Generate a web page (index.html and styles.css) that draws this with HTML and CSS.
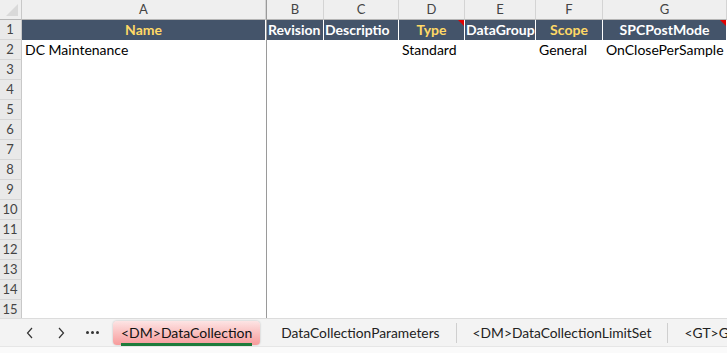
FILE: index.html
```html
<!DOCTYPE html>
<html>
<head>
<meta charset="utf-8">
<link rel="stylesheet" href="styles.css">
</head>
<body>
<div class="sheet">
  <div class="row colhead">
    <div class="rh corner"><span class="tri"></span></div>
    <div class="c a">A</div>
    <div class="c b frz">B</div>
    <div class="c cc">C</div>
    <div class="c d">D</div>
    <div class="c e">E</div>
    <div class="c f">F</div>
    <div class="c g">G</div>
  </div>
  <div class="row hdr">
    <div class="rh">1</div>
    <div class="c a y">Name</div>
    <div class="c b frz">Revision</div>
    <div class="c cc">Descriptio</div>
    <div class="c d y note">Type</div>
    <div class="c e">DataGroup</div>
    <div class="c f y">Scope</div>
    <div class="c g note">SPCPostMode</div>
  </div>
  <div class="row">
    <div class="rh">2</div>
    <div class="c a l">DC Maintenance</div>
    <div class="c b frz"></div>
    <div class="c cc"></div>
    <div class="c d l">Standard</div>
    <div class="c e"></div>
    <div class="c f l">General</div>
    <div class="c g l">OnClosePerSample</div>
  </div>
  <div class="row"><div class="rh">3</div><div class="c a"></div><div class="c b frz"></div></div>
  <div class="row"><div class="rh">4</div><div class="c a"></div><div class="c b frz"></div></div>
  <div class="row"><div class="rh">5</div><div class="c a"></div><div class="c b frz"></div></div>
  <div class="row"><div class="rh">6</div><div class="c a"></div><div class="c b frz"></div></div>
  <div class="row"><div class="rh">7</div><div class="c a"></div><div class="c b frz"></div></div>
  <div class="row"><div class="rh">8</div><div class="c a"></div><div class="c b frz"></div></div>
  <div class="row"><div class="rh">9</div><div class="c a"></div><div class="c b frz"></div></div>
  <div class="row"><div class="rh">10</div><div class="c a"></div><div class="c b frz"></div></div>
  <div class="row"><div class="rh">11</div><div class="c a"></div><div class="c b frz"></div></div>
  <div class="row"><div class="rh">12</div><div class="c a"></div><div class="c b frz"></div></div>
  <div class="row"><div class="rh">13</div><div class="c a"></div><div class="c b frz"></div></div>
  <div class="row"><div class="rh">14</div><div class="c a"></div><div class="c b frz"></div></div>
  <div class="row"><div class="rh">15</div><div class="c a"></div><div class="c b frz"></div></div>
</div>
<div class="tabbar">
  <div class="nav">
    <svg width="10" height="12" viewBox="0 0 10 12"><path d="M7 1 L2.5 6 L7 11" fill="none" stroke="#333" stroke-width="1.2"/></svg>
  </div>
  <div class="nav">
    <svg width="10" height="12" viewBox="0 0 10 12"><path d="M3 1 L7.5 6 L3 11" fill="none" stroke="#333" stroke-width="1.2"/></svg>
  </div>
  <div class="nav dots"><i></i><i></i><i></i></div>
  <div class="tab active"><span>&lt;DM&gt;DataCollection</span></div>
  <div class="tab">DataCollectionParameters</div>
  <div class="sep"></div>
  <div class="tab">&lt;DM&gt;DataCollectionLimitSet</div>
  <div class="sep"></div>
  <div class="tab">&lt;GT&gt;GenericTable</div>
</div>
<div class="status"></div>
</body>
</html>
```
FILE: styles.css
```css
html, body {
  margin: 0;
  padding: 0;
  background: #ffffff;
  overflow: hidden;
  width: 727px;
  height: 353px;
}
body {
  font-family: Lato, "Liberation Sans", sans-serif;
  font-size: 14px;
  color: #000;
}
.sheet {
  height: 318px;
  overflow: hidden;
}
.row {
  display: flex;
  height: 20px;
  white-space: nowrap;
}
.rh {
  flex: 0 0 22px;
  box-sizing: border-box;
  height: 20px;
  background: #e9e9e9;
  border-right: 1px solid #c8c8c8;
  border-bottom: 1px solid #d6d6d6;
  color: #444;
  font-size: 13px;
  line-height: 19px;
  text-align: center;
  padding-right: 1px;
}
.corner {
  position: relative;
  background: #efefef;
  border-bottom: 1px solid #b5b5b5;
}
.tri {
  position: absolute;
  right: 3px;
  bottom: 3px;
  width: 0;
  height: 0;
  border-left: 12px solid transparent;
  border-bottom: 12px solid #d9d9d9;
}
.c {
  box-sizing: border-box;
  height: 20px;
  line-height: 19px;
  overflow: hidden;
  flex: 0 0 auto;
}
.a { width: 244px; }
.b { width: 58px; }
.cc { width: 75px; }
.d { width: 66px; }
.e { width: 71px; }
.f { width: 67px; }
.g { width: 124px; }
.frz { border-left: 1px solid #9a9a9a; }
.colhead .c {
  background: #efefef;
  color: #444;
  text-align: center;
  font-size: 13px;
  border-right: 1px solid #d4d4d4;
  border-bottom: 1px solid #b5b5b5;
}
.colhead .frz { border-left: 1px solid #9a9a9a; }
.hdr .c {
  background: #44546a;
  color: #ffffff;
  font-weight: bold;
  text-align: center;
  border-right: 1px solid #ffffff;
  position: relative;
}
.hdr .frz { border-left: 1px solid #9a9a9a; }
.hdr .b, .hdr .cc, .hdr .e { text-align: left; padding-left: 1px; }
.hdr .y { color: #ffd966; }
.note::after {
  content: "";
  position: absolute;
  top: 0;
  right: 0;
  width: 0;
  height: 0;
  border-left: 6px solid transparent;
  border-top: 6px solid #e00000;
}
.l { padding-left: 3px; }
.tabbar {
  height: 27px;
  background: #f3f3f3;
  border-top: 1px solid #dcdcdc;
  display: flex;
  align-items: center;
  padding-left: 20px;
  font-size: 13.8px;
  color: #222;
  white-space: nowrap;
  overflow: hidden;
}
.tabbar > * { flex-shrink: 0; }
.nav {
  width: 20px;
  margin-right: 11px;
  display: flex;
  justify-content: center;
  align-items: center;
  height: 20px;
}
.dots i {
  display: inline-block;
  width: 3px;
  height: 3px;
  background: #333;
  border-radius: 50%;
  margin: 0 1px;
}
.dots { margin-right: 11px; }
.tab {
  padding: 0 16px;
  height: 24px;
  line-height: 24px;
}
.tab.active {
  margin-right: 5px;
  padding: 0 8px;
  background: linear-gradient(#fde4e4, #f79b9b);
  border-radius: 4px;
  box-shadow: 0 0 2px rgba(0,0,0,0.25);
  font-size: 14px;
  color: #111;
}
.tab.active span {
  display: inline-block;
  line-height: 20px;
  border-bottom: 3px solid #1e7b3b;
}
.sep {
  width: 1px;
  height: 20px;
  background: #cfcfcf;
}
.status {
  height: 7px;
  background: #fafafa;
  border-top: 1px solid #e6e6e6;
}
```
